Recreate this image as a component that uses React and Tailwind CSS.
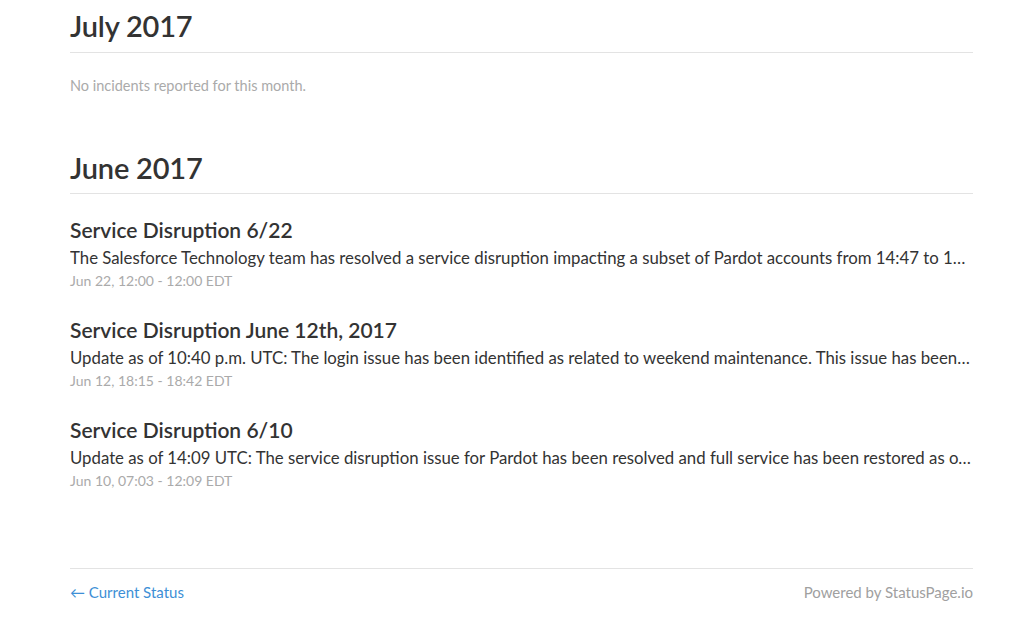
import React from "react";

const incidents = [
  {
    title: "Service Disruption 6/22",
    body: "The Salesforce Technology team has resolved a service disruption impacting a subset of Pardot accounts from 14:47 to 15:05 UTC on June 22, 2017. Customers may have experienced performance degradation.",
    date: "Jun 22, 12:00 - 12:00 EDT",
  },
  {
    title: "Service Disruption June 12th, 2017",
    body: "Update as of 10:40 p.m. UTC: The login issue has been identified as related to weekend maintenance. This issue has been resolved.",
    date: "Jun 12, 18:15 - 18:42 EDT",
  },
  {
    title: "Service Disruption 6/10",
    body: "Update as of 14:09 UTC: The service disruption issue for Pardot has been resolved and full service has been restored as of this time.",
    date: "Jun 10, 07:03 - 12:09 EDT",
  },
];

export default function App() {
  return (
    <div
      className="w-[1024px] min-h-[636px] bg-white text-[#333333]"
      style={{ fontFamily: "Lato, 'Open Sans', sans-serif" }}
    >
      <div className="w-[903px] ml-[70px]">
        <section>
          <h2 className="pt-[7px] pb-[7px] text-[29px] leading-[38px] font-semibold border-b border-[#e3e3e3] tracking-[-0.2px]">
            July 2017
          </h2>
          <p className="mt-[23px] text-[14.5px] leading-[20px] text-[#aaaaaa]">
            No incidents reported for this month.
          </p>
        </section>

        <section className="mt-[53px]">
          <h2 className="pb-[6px] text-[29px] leading-[38px] font-semibold border-b border-[#e3e3e3] tracking-[-0.2px]">
            June 2017
          </h2>
          <div className="mt-[23px] flex flex-col gap-[27px]">
            {incidents.map((i) => (
              <div key={i.title}>
                <div className="text-[21px] leading-[26px] font-semibold">{i.title}</div>
                <div className="mt-[4px] text-[16.8px] leading-[22px] truncate">{i.body}</div>
                <div className="mt-[3px] text-[14px] leading-[18px] text-[#aaaaaa]">{i.date}</div>
              </div>
            ))}
          </div>
        </section>

        <footer className="mt-[78px] border-t border-[#e3e3e3] pt-[13px] flex justify-between text-[15px] leading-[20px]">
          <a className="text-[#3d8fd6]">← Current Status</a>
          <span className="text-[#a0a0a0]">Powered by StatusPage.io</span>
        </footer>
      </div>
    </div>
  );
}
